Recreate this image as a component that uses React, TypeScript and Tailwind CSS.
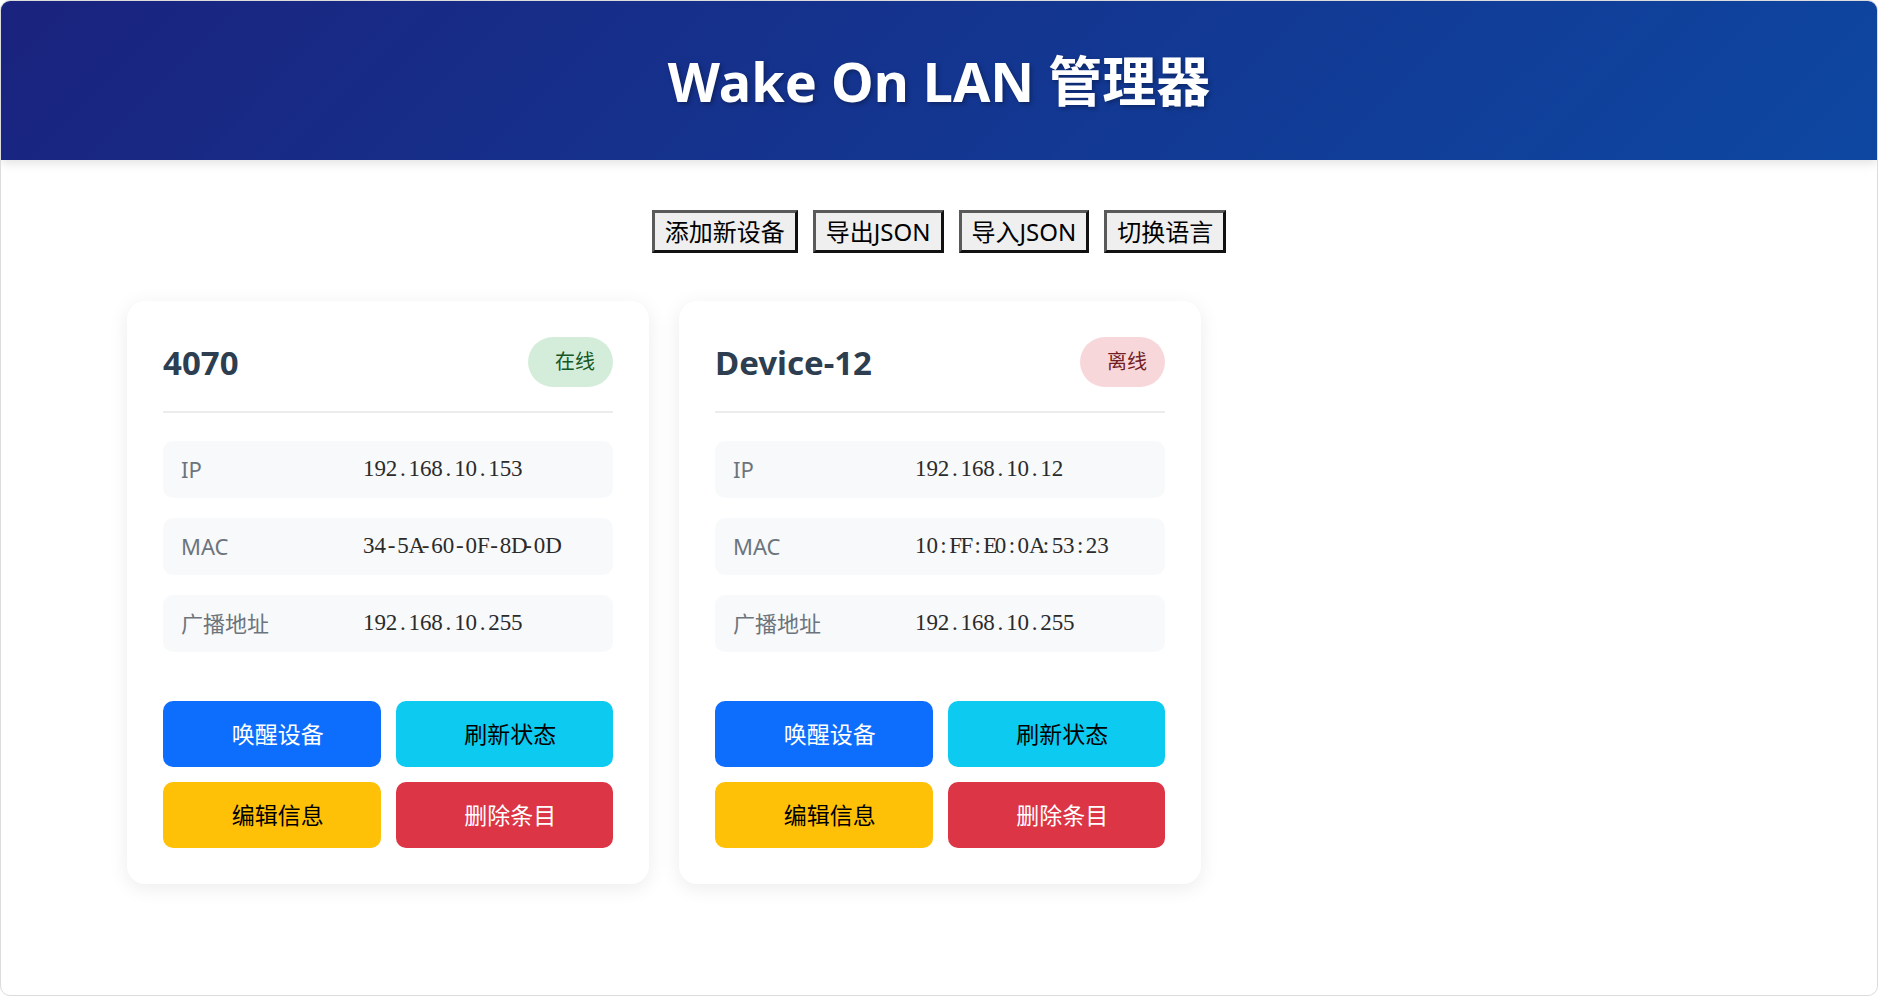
import React from "react";

type Device = {
  name: string;
  online: boolean;
  ip: string;
  mac: string;
  broadcast: string;
};

const devices: Device[] = [
  { name: "4070", online: true, ip: "192.168.10.153", mac: "34-5A-60-0F-8D-0D", broadcast: "192.168.10.255" },
  { name: "Device-12", online: false, ip: "192.168.10.12", mac: "10:FF:E0:0A:53:23", broadcast: "192.168.10.255" },
];

const sans = "font-['Noto_Sans','Noto_Sans_CJK_SC',sans-serif]";

function ToolButton({ children }: { children: React.ReactNode }) {
  return (
    <button className="h-[43px] px-[10px] bg-[#efefef] text-black text-[24px] leading-none border-[3px] border-t-[#5a5a5a] border-l-[#5a5a5a] border-r-[#111] border-b-[#111]">
      {children}
    </button>
  );
}

// monospace-like value: every glyph gets the same half-em cell
function MonoValue({ value }: { value: string }) {
  return (
    <span className="text-[23px] text-[#2b2b2b] font-['Liberation_Serif',serif]">
      {value.split("").map((c, i) => (
        <span key={i} className="inline-block w-[11.4px] text-center">
          {c}
        </span>
      ))}
    </span>
  );
}

function InfoRow({ label, value }: { label: string; value: string }) {
  return (
    <div className="h-[57px] bg-[#f8f9fa] rounded-[10px] flex items-center px-[18px]">
      <span className="w-[182px] shrink-0 text-[22px] text-[#6c757d]">{label}</span>
      <MonoValue value={value} />
    </div>
  );
}

function ActionButton({ className, children }: { className: string; children: React.ReactNode }) {
  return (
    <button className={`h-[66px] rounded-[10px] text-[23px] pl-[12px] ${className}`}>{children}</button>
  );
}

function DeviceCard({ device }: { device: Device }) {
  return (
    <div className="w-[522px] bg-white rounded-[18px] shadow-[0_4px_20px_rgba(0,0,0,0.08)] px-[36px] pt-[36px] pb-[36px]">
      {/* Card header */}
      <div className="h-[50px] flex items-center justify-between">
        <h2 className="text-[33px] font-bold text-[#2c3e50] leading-none">{device.name}</h2>
        {device.online ? (
          <span className="h-[50px] flex items-center pl-[27px] pr-[18px] rounded-full bg-[#d4edda] text-[#155724] text-[20px]">在线</span>
        ) : (
          <span className="h-[50px] flex items-center pl-[27px] pr-[18px] rounded-full bg-[#f8d7da] text-[#721c24] text-[20px]">离线</span>
        )}
      </div>
      <div className="mt-[24px] h-[2px] bg-[#ececec]" />

      {/* Info */}
      <div className="mt-[28px] flex flex-col gap-[20px]">
        <InfoRow label="IP" value={device.ip} />
        <InfoRow label="MAC" value={device.mac} />
        <InfoRow label="广播地址" value={device.broadcast} />
      </div>

      {/* Actions */}
      <div className="mt-[49px] grid grid-cols-2 gap-[15px]">
        <ActionButton className="bg-[#0d6efd] text-white">唤醒设备</ActionButton>
        <ActionButton className="bg-[#0dcaf0] text-black">刷新状态</ActionButton>
        <ActionButton className="bg-[#ffc107] text-black">编辑信息</ActionButton>
        <ActionButton className="bg-[#dc3545] text-white">删除条目</ActionButton>
      </div>
    </div>
  );
}

export default function App() {
  return (
    <div className={`min-h-screen bg-white border border-[#dcdcdc] rounded-[10px] overflow-hidden ${sans}`}>
      <header className="h-[159px] flex items-center justify-center bg-[linear-gradient(135deg,#1a237e,#0d47a1)] shadow-[0_3px_10px_rgba(0,0,0,0.12)] relative">
        <h1 className="text-[54px] font-bold text-white leading-none [text-shadow:2px_2px_4px_rgba(0,0,0,0.3)]">
          Wake On LAN 管理器
        </h1>
      </header>

      <div className="mt-[50px] flex justify-center gap-[15px]">
        <ToolButton>添加新设备</ToolButton>
        <ToolButton>导出JSON</ToolButton>
        <ToolButton>导入JSON</ToolButton>
        <ToolButton>切换语言</ToolButton>
      </div>

      <div className="mt-[48px] pl-[126px] flex gap-[30px] pb-[40px]">
        {devices.map((d) => (
          <DeviceCard key={d.name} device={d} />
        ))}
      </div>
    </div>
  );
}
